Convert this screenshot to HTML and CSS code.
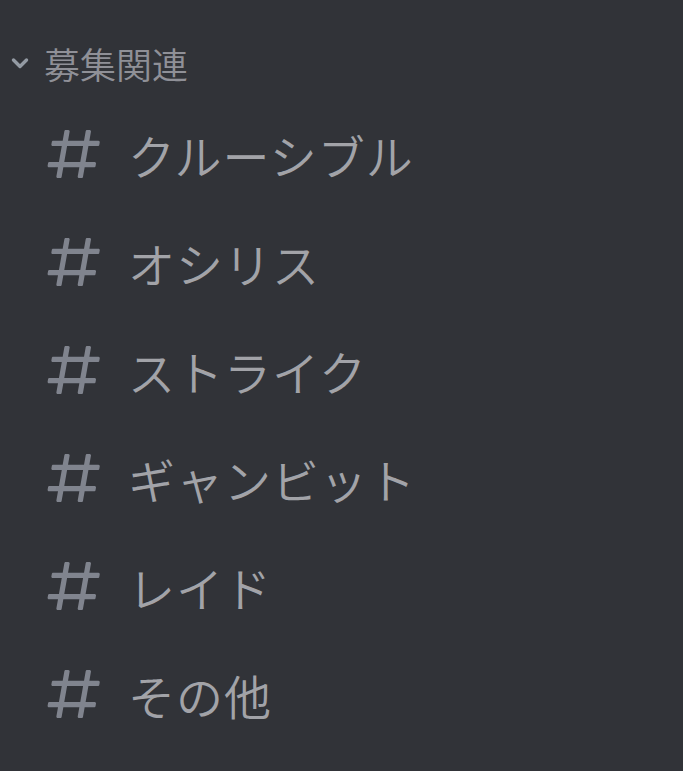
FILE: index.html
```html
<!DOCTYPE html>
<html lang="ja">
<head>
  <meta charset="utf-8">
  <title>募集関連</title>
  <link rel="stylesheet" href="styles.css">
</head>
<body>
  <div class="sidebar">
    <div class="category">
      <svg class="chevron" viewBox="0 0 24 24" fill="none" stroke="currentColor">
        <path d="M5.5 9l6.5 6.5L18.5 9" stroke-width="3.4" stroke-linecap="round" stroke-linejoin="round"/>
      </svg>
      <span class="category-name">募集関連</span>
    </div>

    <ul class="channel-list">
      <li class="channel">
        <svg class="hash" viewBox="0 0 24 24"><use href="#hash-icon"/></svg>
        <span class="channel-name">クルーシブル</span>
      </li>
      <li class="channel">
        <svg class="hash" viewBox="0 0 24 24"><use href="#hash-icon"/></svg>
        <span class="channel-name">オシリス</span>
      </li>
      <li class="channel">
        <svg class="hash" viewBox="0 0 24 24"><use href="#hash-icon"/></svg>
        <span class="channel-name">ストライク</span>
      </li>
      <li class="channel">
        <svg class="hash" viewBox="0 0 24 24"><use href="#hash-icon"/></svg>
        <span class="channel-name">ギャンビット</span>
      </li>
      <li class="channel">
        <svg class="hash" viewBox="0 0 24 24"><use href="#hash-icon"/></svg>
        <span class="channel-name">レイド</span>
      </li>
      <li class="channel">
        <svg class="hash" viewBox="0 0 24 24"><use href="#hash-icon"/></svg>
        <span class="channel-name">その他</span>
      </li>
    </ul>
  </div>

  <!-- shared channel hash glyph -->
  <svg class="defs" width="0" height="0">
    <defs>
      <path id="hash-icon" fill="currentColor" fill-rule="evenodd" d="M5.89 21C5.58 21 5.34 20.72 5.39 20.41L6 17H2.6C2.28 17 2.05 16.72 2.1 16.41L2.28 15.41C2.32 15.17 2.53 15 2.77 15H6.35L7.41 9H4.01C3.69 9 3.46 8.72 3.51 8.41L3.69 7.41C3.73 7.17 3.94 7 4.18 7H7.76L8.4 3.41C8.44 3.17 8.65 3 8.89 3H9.87C10.18 3 10.42 3.28 10.37 3.59L9.76 7H15.76L16.4 3.41C16.44 3.17 16.65 3 16.89 3H17.87C18.18 3 18.42 3.28 18.37 3.59L17.76 7H21.16C21.48 7 21.71 7.28 21.66 7.59L21.48 8.59C21.44 8.83 21.23 9 20.99 9H17.41L16.35 15H19.75C20.07 15 20.3 15.28 20.25 15.59L20.07 16.59C20.03 16.83 19.82 17 19.58 17H16L15.36 20.59C15.32 20.83 15.11 21 14.87 21H13.89C13.58 21 13.34 20.72 13.39 20.41L14 17H8L7.36 20.59C7.32 20.83 7.11 21 6.87 21H5.89ZM9.41 9L8.35 15H14.35L15.41 9H9.41Z"/>
    </defs>
  </svg>
</body>
</html>
```

FILE: styles.css
```css
:root {
  --background: #313338;
  --text-muted: #949ba4;
  --icon-muted: #80848e;
  --cjk-font: "Noto Sans CJK JP", "Noto Sans", sans-serif;
}

html, body {
  margin: 0;
  padding: 0;
  background: var(--background);
  height: 100%;
}

body {
  font-family: var(--cjk-font);
  color: var(--text-muted);
}

.defs {
  position: absolute;
  width: 0;
  height: 0;
}

.sidebar {
  padding-top: 26px;
}

/* category header */
.category {
  display: flex;
  align-items: center;
  height: 74px;
  padding-left: 8px;
}

.chevron {
  width: 24px;
  height: 24px;
  color: var(--text-muted);
}

.category-name {
  margin-left: 12px;
  font-size: 36px;
  font-weight: 350;
  line-height: 1;
  color: #8f9097;
}

/* channel rows */
.channel-list {
  list-style: none;
  margin: 0;
  padding: 0;
}

.channel {
  display: flex;
  align-items: center;
  height: 108px;
  padding-left: 42px;
}

.hash {
  width: 64px;
  height: 64px;
  flex-shrink: 0;
  color: var(--icon-muted);
}

.channel-name {
  margin-left: 22px;
  font-size: 47px;
  font-weight: 350;
  letter-spacing: 1px;
  line-height: 1;
  color: #a2a3a8;
}
```
